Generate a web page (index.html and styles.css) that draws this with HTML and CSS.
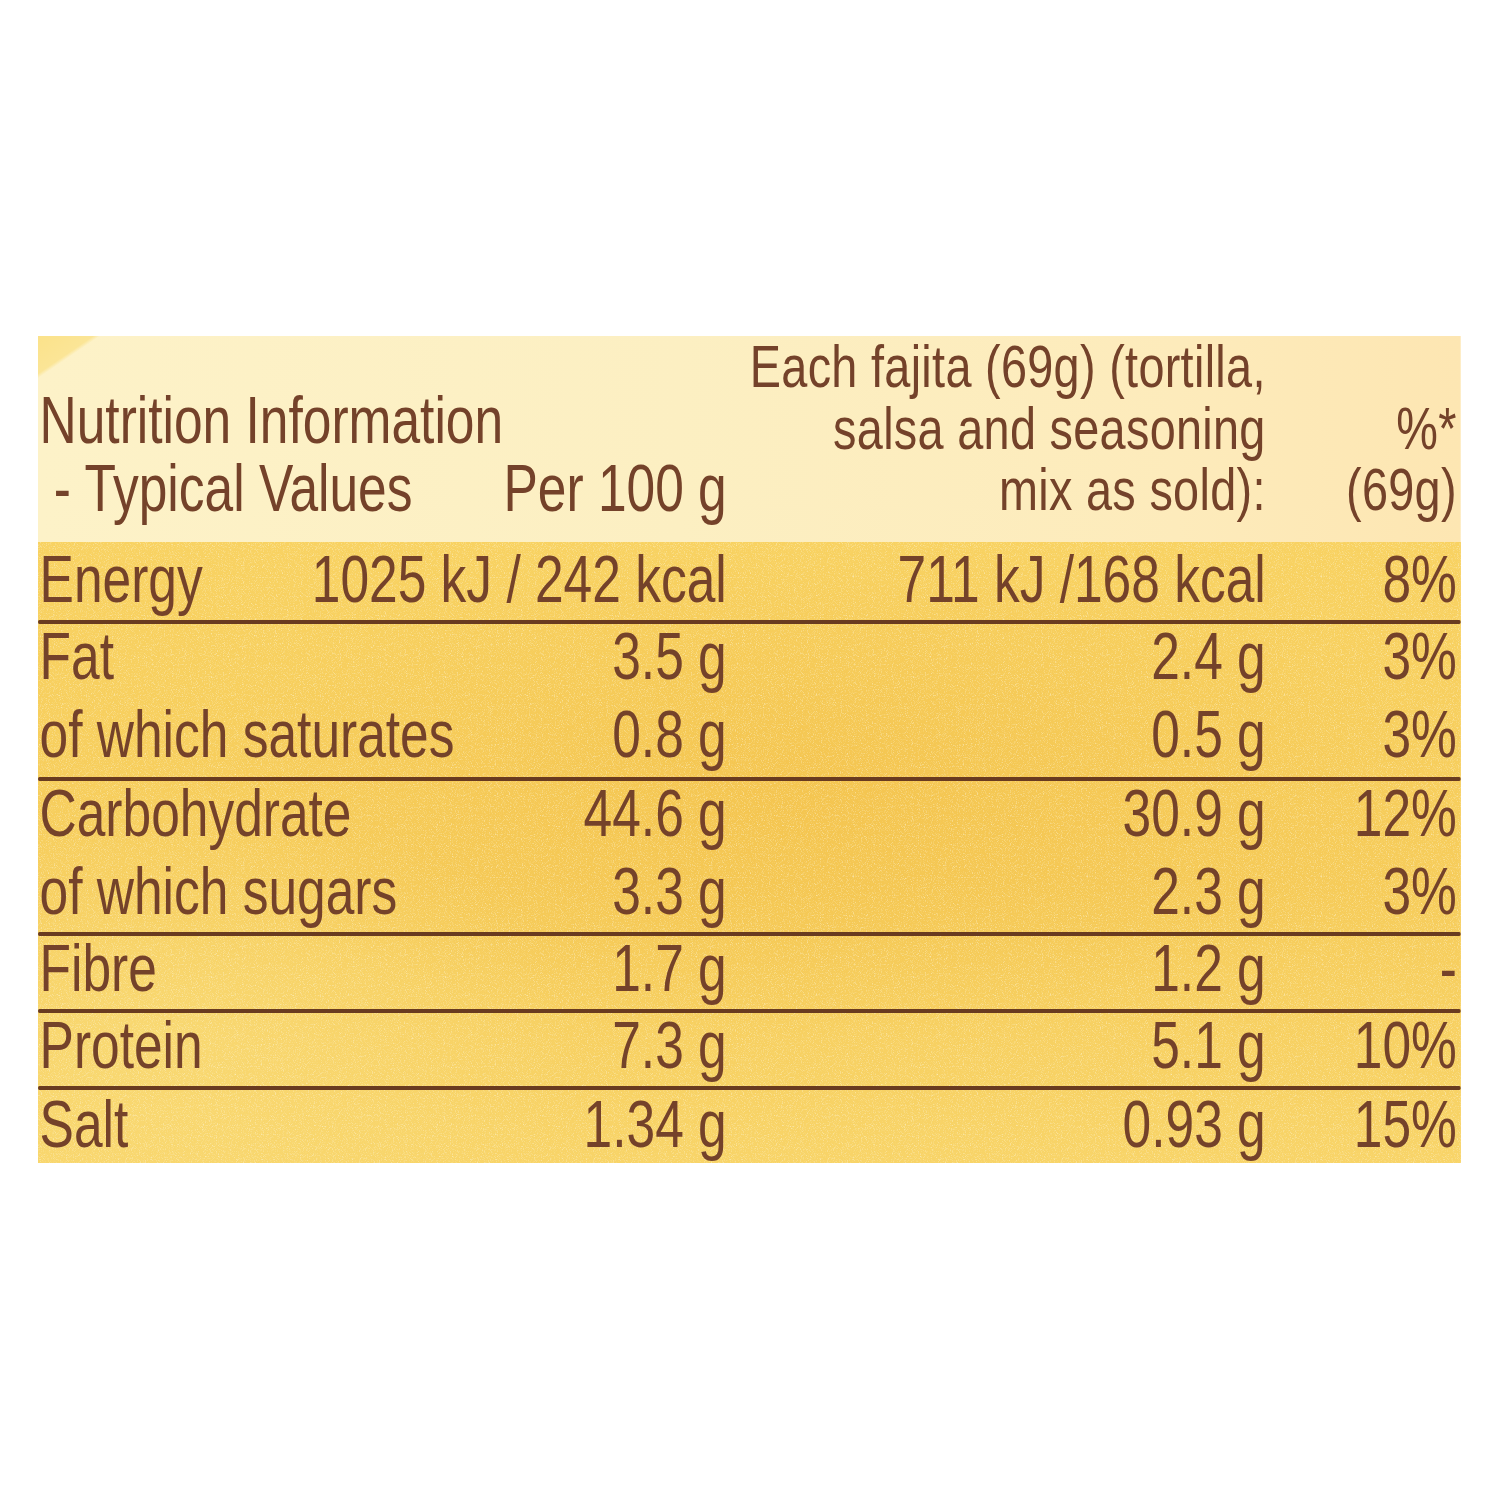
FILE: index.html
```html
<!DOCTYPE html>
<html lang="en">
<head>
<meta charset="utf-8">
<title>Nutrition Information</title>
<link rel="stylesheet" href="styles.css">
</head>
<body>
<div class="page">
  <div class="panel">
    <div class="head">
      <div class="cell c1 lead"><div>Nutrition Information</div><div>&nbsp;- Typical Values</div></div>
      <div class="cell c2">Per 100 g</div>
      <div class="cell c3 small"><div>Each fajita (69g) (tortilla,</div><div>salsa and seasoning</div><div>mix as sold):</div></div>
      <div class="cell c4 small"><div>%*</div><div>(69g)</div></div>
    </div>
    <div class="body">
      <div class="row r-energy"><span class="c1">Energy</span><span class="c2">1025 kJ / 242 kcal</span><span class="c3">711 kJ /168 kcal</span><span class="c4">8%</span></div>
      <div class="rule"></div>
      <div class="row r-top"><span class="c1">Fat</span><span class="c2">3.5 g</span><span class="c3">2.4 g</span><span class="c4">3%</span></div>
      <div class="row r-bot"><span class="c1">of which saturates</span><span class="c2">0.8 g</span><span class="c3">0.5 g</span><span class="c4">3%</span></div>
      <div class="rule"></div>
      <div class="row r-top"><span class="c1">Carbohydrate</span><span class="c2">44.6 g</span><span class="c3">30.9 g</span><span class="c4">12%</span></div>
      <div class="row r-bot2"><span class="c1">of which sugars</span><span class="c2">3.3 g</span><span class="c3">2.3 g</span><span class="c4">3%</span></div>
      <div class="rule"></div>
      <div class="row r-single"><span class="c1">Fibre</span><span class="c2">1.7 g</span><span class="c3">1.2 g</span><span class="c4">-</span></div>
      <div class="rule"></div>
      <div class="row r-single"><span class="c1">Protein</span><span class="c2">7.3 g</span><span class="c3">5.1 g</span><span class="c4">10%</span></div>
      <div class="rule"></div>
      <div class="row r-single r-salt"><span class="c1">Salt</span><span class="c2">1.34 g</span><span class="c3">0.93 g</span><span class="c4">15%</span></div>
    </div>
  </div>
</div>
</body>
</html>
```

FILE: styles.css
```css
html, body {
  margin: 0;
  padding: 0;
  background: #ffffff;
  overflow: hidden;
}

.page {
  width: 1500px;
  height: 1500px;
  padding-top: 336px;
  box-sizing: border-box;
}

/* The panel is laid out at natural Arial widths and condensed horizontally
   to mimic the condensed face used on the pack. */
.panel {
  margin-left: 38px;
  width: 1824px;
  transform: scaleX(0.78);
  transform-origin: 0 0;
  font-family: "Liberation Sans", Arial, sans-serif;
  font-size: 66px;
  color: #74422a;
  white-space: nowrap;
}

.head,
.row {
  display: grid;
  grid-template-columns: 340px 541px 691px 245px;
  padding: 0 5px 0 2px;
}

.head {
  height: 206px;
  box-sizing: border-box;
  align-items: end;
  padding-bottom: 26px;
  line-height: 62px;
  background:
    linear-gradient(152deg, #fbe28a 0, #fbe596 3.2%, rgba(252, 238, 190, 0) 3.6%),
    linear-gradient(90deg, #fdf2c8 0%, #fcefc2 45%, #fdebbb 80%, #fde6b2 100%);
}

.head .lead {
  line-height: 68px;
  margin-bottom: -3px;
}

.head .small {
  font-size: 60px;
  letter-spacing: 0.4px;
  line-height: 61.5px;
  margin-bottom: -2px;
}

.c2, .c3, .c4 {
  text-align: right;
}

.body {
  background-color: #f7cf5e;
  background-image:
    url("data:image/svg+xml;utf8,<svg xmlns='http://www.w3.org/2000/svg' width='300' height='300'><filter id='n'><feTurbulence type='fractalNoise' baseFrequency='0.9' numOctaves='2' stitchTiles='stitch'/><feColorMatrix values='0 0 0 0 1  0 0 0 0 0.97  0 0 0 0 0.8  0 0 0 1.4 -0.72'/></filter><rect width='300' height='300' filter='url(%23n)'/></svg>"),
    radial-gradient(ellipse 45% 40% at 55% 40%, rgba(242, 190, 70, 0.55) 0%, rgba(242, 190, 70, 0) 100%),
    radial-gradient(ellipse 30% 40% at 8% 80%, rgba(250, 224, 130, 0.5) 0%, rgba(250, 224, 130, 0) 100%),
    linear-gradient(180deg, #f8d262 0%, #f6cc5a 55%, #f8d468 100%);
}

.row {
  line-height: 64px;
}

.r-energy {
  height: 78px;
  box-sizing: border-box;
  padding-top: 5px;
}

.r-top {
  height: 78px;
}

.r-bot {
  height: 75px;
}

.r-bot2 {
  height: 73px;
}

.r-single {
  height: 73px;
}

.r-salt {
  padding-top: 2px;
  height: 71px;
}

.rule {
  height: 4px;
  background: #693b20;
  border-radius: 2px;
}
```
